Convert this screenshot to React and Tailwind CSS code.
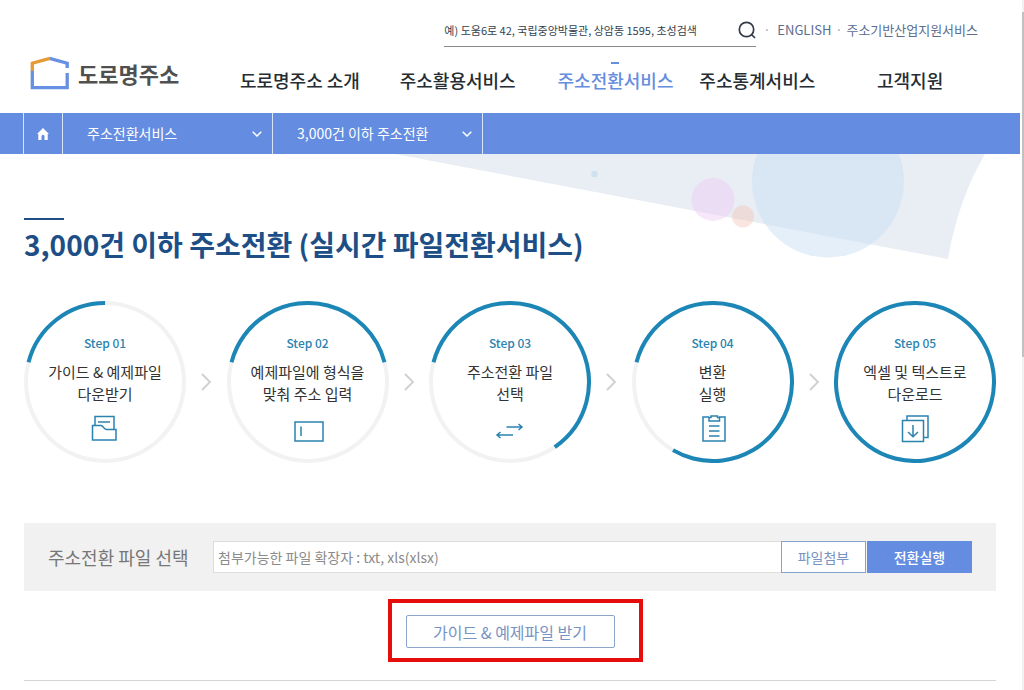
import { useState } from 'react'
import clsx from 'clsx'

const NAV_ITEMS = [
  { label: '도로명주소 소개' },
  { label: '주소활용서비스' },
  { label: '주소전환서비스', active: true },
  { label: '주소통계서비스' },
  { label: '고객지원' }
]

// sweep: how many degrees of the ring are filled, clockwise from the left shoulder
const STEPS = [
  { no: '01', lines: ['가이드 & 예제파일', '다운받기'], sweep: 75.5, Icon: FolderIcon },
  { no: '02', lines: ['예제파일에 형식을', '맞춰 주소 입력'], sweep: 151, Icon: FieldIcon },
  { no: '03', lines: ['주소전환 파일', '선택'], sweep: 221, Icon: ArrowsIcon },
  { no: '04', lines: ['변환', '실행'], sweep: 286, Icon: ClipboardIcon },
  { no: '05', lines: ['엑셀 및 텍스트로', '다운로드'], sweep: 360, Icon: DownloadIcon }
]

function StepSvg({ children }) {
  return (
    <svg viewBox="0 0 32 30" className="w-8 h-[30px]" fill="none" stroke="#2a83ae" strokeWidth="1.5" aria-hidden="true">
      {children}
    </svg>
  )
}

function FolderIcon() {
  return (
    <StepSvg>
      <path d="M6 11.5V2.5H25V15" />
      <path d="M9 8H21" />
      <path d="M3.5 11.5H12C14.5 11.5 14.5 15.5 17.5 15.5H27V26H3.5Z" />
    </StepSvg>
  )
}

function FieldIcon() {
  return (
    <StepSvg>
      <path d="M3 8H31V27H3Z" />
      <path d="M9 12.5V22" />
    </StepSvg>
  )
}

function ArrowsIcon() {
  return (
    <StepSvg>
      <path d="M12.5 13H28M24.5 10L28 13L24.5 16" />
      <path d="M19 21H3M6.5 18L3 21L6.5 24" />
    </StepSvg>
  )
}

function ClipboardIcon() {
  return (
    <StepSvg>
      <path d="M12 3H6V27H28V3H22" />
      <path d="M12 3.5H14V2H20.5V3.5H22.5V7H12Z" />
      <path d="M12 12H22.500M12 17H22.500M12 22H22.500" />
    </StepSvg>
  )
}

function DownloadIcon() {
  return (
    <StepSvg>
      <path d="M8 6V2H29V23.5H25" />
      <path d="M3.5 6.5H24.5V27.5H3.5Z" />
      <path d="M14 11V22.5M9 18L14 22.8L19 18" />
    </StepSvg>
  )
}

function Logo() {
  return (
    <a href="#" className="flex items-center gap-2 shrink-0">
      <svg viewBox="0 0 40 34" className="w-10 h-[34px]" fill="none" strokeWidth="3.3" aria-hidden="true">
        <path d="M19.5 2.3L37.2 7.2V12M37.2 17V31.6H2.3V14" stroke="#6790e2" />
        <path d="M2.3 15V7.2L20 2.3" stroke="#e69a35" />
      </svg>
      <span className="text-[22px] leading-8 font-bold text-[#505050]">도로명주소</span>
    </a>
  )
}

function Header() {
  return (
    <header className="flex pl-[30px] pr-5">
      <div className="w-[191px] shrink-0 pt-14 flex items-start">
        <Logo />
      </div>
      <div className="flex-1">
        <div className="flex justify-end items-start pr-[22px] pt-3.5">
          <form className="flex items-center w-[312px] h-[33px] border-b border-[#8a8a8a]" onSubmit={(e) => e.preventDefault()}>
            <input
              type="text"
              aria-label="주소 검색"
              placeholder="예) 도움6로 42, 국립중앙박물관, 상암동 1595, 초성검색"
              className="flex-1 min-w-0 text-[11px] text-[#333f50] placeholder:text-[#333f50] outline-none"
            />
            <button type="submit" aria-label="검색">
              <svg viewBox="0 0 18 18" className="w-[18px] h-[18px]" fill="none" stroke="#333b47" strokeWidth="1.7" aria-hidden="true">
                <circle cx="8.5" cy="8.5" r="7.2" />
                <path d="M13.5 13.5L17 17" />
              </svg>
            </button>
          </form>
          <div className="flex items-center h-8 text-[13px] text-[#5b6d91]">
            <span className="w-[21px] text-center text-[#9aa6bf]">·</span>
            <a href="#">ENGLISH</a>
            <span className="w-[15px] text-center text-[#9aa6bf]">·</span>
            <a href="#">주소기반산업지원서비스</a>
          </div>
        </div>
        <nav className="grid grid-cols-[158fr_158fr_158fr_126fr_180fr] h-[66px] items-center text-center text-lg font-medium text-[#252d33] whitespace-nowrap">
          {NAV_ITEMS.map(({ label, active }) => (
            <a key={label} href="#" className={clsx('relative', active && 'text-[#658de0]')}>
              {active && <span className="absolute -top-1 left-1/2 w-2 h-0.5 -ml-1 bg-[#658de0]" />}
              {label}
            </a>
          ))}
        </nav>
      </div>
    </header>
  )
}

function CrumbSelect({ label, value }) {
  return (
    <div className="relative w-[210px] h-full border-r border-[#dbe5fa]">
      <select aria-label={label} defaultValue={value} className="w-full h-full pl-6 pb-0.5 appearance-none text-sm text-white outline-none">
        <option>{value}</option>
      </select>
      <svg viewBox="0 0 10 6" className="absolute right-2.5 top-1/2 -mt-[3px] w-2.5 h-1.5 pointer-events-none" fill="none" stroke="#fff" strokeWidth="1.5" aria-hidden="true">
        <path d="M0.7 0.7L5 5L9.3 0.7" />
      </svg>
    </div>
  )
}

function Breadcrumb() {
  return (
    <div className="flex h-[41px] pl-[23px] bg-[#648de1]">
      <a href="#" aria-label="홈" className="flex items-center justify-center w-10 border-x border-[#dbe5fa]">
        <svg viewBox="0 0 12 12" className="w-3 h-3" fill="#fff" aria-hidden="true">
          <path d="M6 0L12 6H10.7V12H7.5V8.3A1.5 1.5 0 0 0 4.5 8.3V12H1.3V6H0Z" />
        </svg>
      </a>
      <CrumbSelect label="서비스 메뉴" value="주소전환서비스" />
      <CrumbSelect label="하위 메뉴" value="3,000건 이하 주소전환" />
    </div>
  )
}

function Backdrop() {
  return (
    <svg viewBox="0 0 640 110" className="absolute top-0 right-0 w-[640px] h-[110px]" aria-hidden="true">
      <path d="M15 0L568 105Q578 46 605 0Z" fill="#e9eef4" />
      <circle cx="214.5" cy="20" r="3.3" fill="#cfe2f1" />
      <circle cx="333" cy="45.5" r="21.5" fill="#eec4f6" opacity="0.4" />
      <circle cx="363" cy="62.5" r="11" fill="#f3bfb2" opacity="0.4" />
      <circle cx="448" cy="27.5" r="76" fill="#c9dff3" opacity="0.5" />
    </svg>
  )
}

function Step({ no, lines, sweep, Icon }) {
  return (
    <div className="relative w-[162px] h-[162px] pt-8 flex flex-col items-center text-center">
      <svg viewBox="0 0 162 162" className="absolute inset-0" fill="none" strokeWidth="4" aria-hidden="true">
        <circle cx="81" cy="81" r="79" stroke="#f2f2f2" />
        <circle
          cx="81"
          cy="81"
          r="79"
          stroke="#1c86b6"
          pathLength="360"
          strokeDasharray={`${sweep} ${360 - sweep}`}
          transform="rotate(194.5 81 81)"
        />
      </svg>
      <span className="text-xs leading-5 font-medium text-[#2a83ae]">Step {no}</span>
      <p className="mt-2 text-[15px] leading-[22px] text-[#333]">
        {lines[0]}
        <br />
        {lines[1]}
      </p>
      <div className="mt-[9px]">
        <Icon />
      </div>
    </div>
  )
}

function StepList() {
  return (
    <ol className="flex items-center justify-between">
      {STEPS.map((step, i) => (
        <li key={step.no} className="contents">
          {i > 0 && (
            <svg viewBox="0 0 10 18" className="w-2.5 h-[18px]" fill="none" stroke="#cfcfcf" strokeWidth="1.8" aria-hidden="true">
              <path d="M1 1L9 9L1 17" />
            </svg>
          )}
          <Step {...step} />
        </li>
      ))}
    </ol>
  )
}

function UploadForm() {
  const [fileName, setFileName] = useState('')

  return (
    <form className="flex items-center h-[68px] px-6 bg-[#f1f1f1]" onSubmit={(e) => e.preventDefault()}>
      <label htmlFor="file" className="w-[165px] text-lg text-[#777]">주소전환 파일 선택</label>
      <input
        id="file"
        type="text"
        value={fileName}
        onChange={(e) => setFileName(e.target.value)}
        placeholder="첨부가능한 파일 확장자 : txt, xls(xlsx)"
        className="flex-1 min-w-0 h-8 px-1 bg-white border border-r-0 border-[#ddd] text-sm placeholder:text-[#8b8b8b] outline-none"
      />
      <button type="button" className="w-[85px] h-8 mr-px bg-white border border-[#84a3cd] text-sm text-[#7793c4]">
        파일첨부
      </button>
      <button type="submit" className="w-[105px] h-8 bg-[#648de1] text-sm font-medium text-white">
        전환실행
      </button>
    </form>
  )
}

export default function App() {
  return (
    <div className="flex min-h-screen bg-white font-['Noto_Sans_CJK_KR',sans-serif]">
      <div className="flex-1 min-w-0">
        <Header />
        <Breadcrumb />
        <main className="relative px-6 pt-16">
          <Backdrop />
          <div className="relative">
            <div className="w-10 h-0.5 bg-[#1d4f86]" />
            <h1 className="mt-1 text-[28px] leading-10 font-bold text-[#1d4f86]">
              3,000건 이하 주소전환 (실시간 파일전환서비스)
            </h1>
          </div>
          <div className="mt-[37px]">
            <StepList />
          </div>
          <div className="mt-[60px]">
            <UploadForm />
          </div>
          <div className="flex justify-center pt-6 pb-8 border-b border-[#d5d5d5]">
            <div className="relative">
              <button type="button" className="w-[209px] h-[33px] border border-[#8aa5cc] rounded-xs text-base leading-6 text-[#7793c4]">
                가이드 & 예제파일 받기
              </button>
              {/* highlight frame around the download button */}
              <div className="absolute -top-4 -bottom-3.5 -left-[18px] -right-7 border-4 border-[#e60d0d] pointer-events-none" />
            </div>
          </div>
        </main>
      </div>
      <div className="w-1 pl-0.5 bg-[#f1f1f1] bg-clip-content">
        <div className="h-3" />
        <div className="h-[50vh] bg-[#c1c1c1]" />
      </div>
    </div>
  )
}
